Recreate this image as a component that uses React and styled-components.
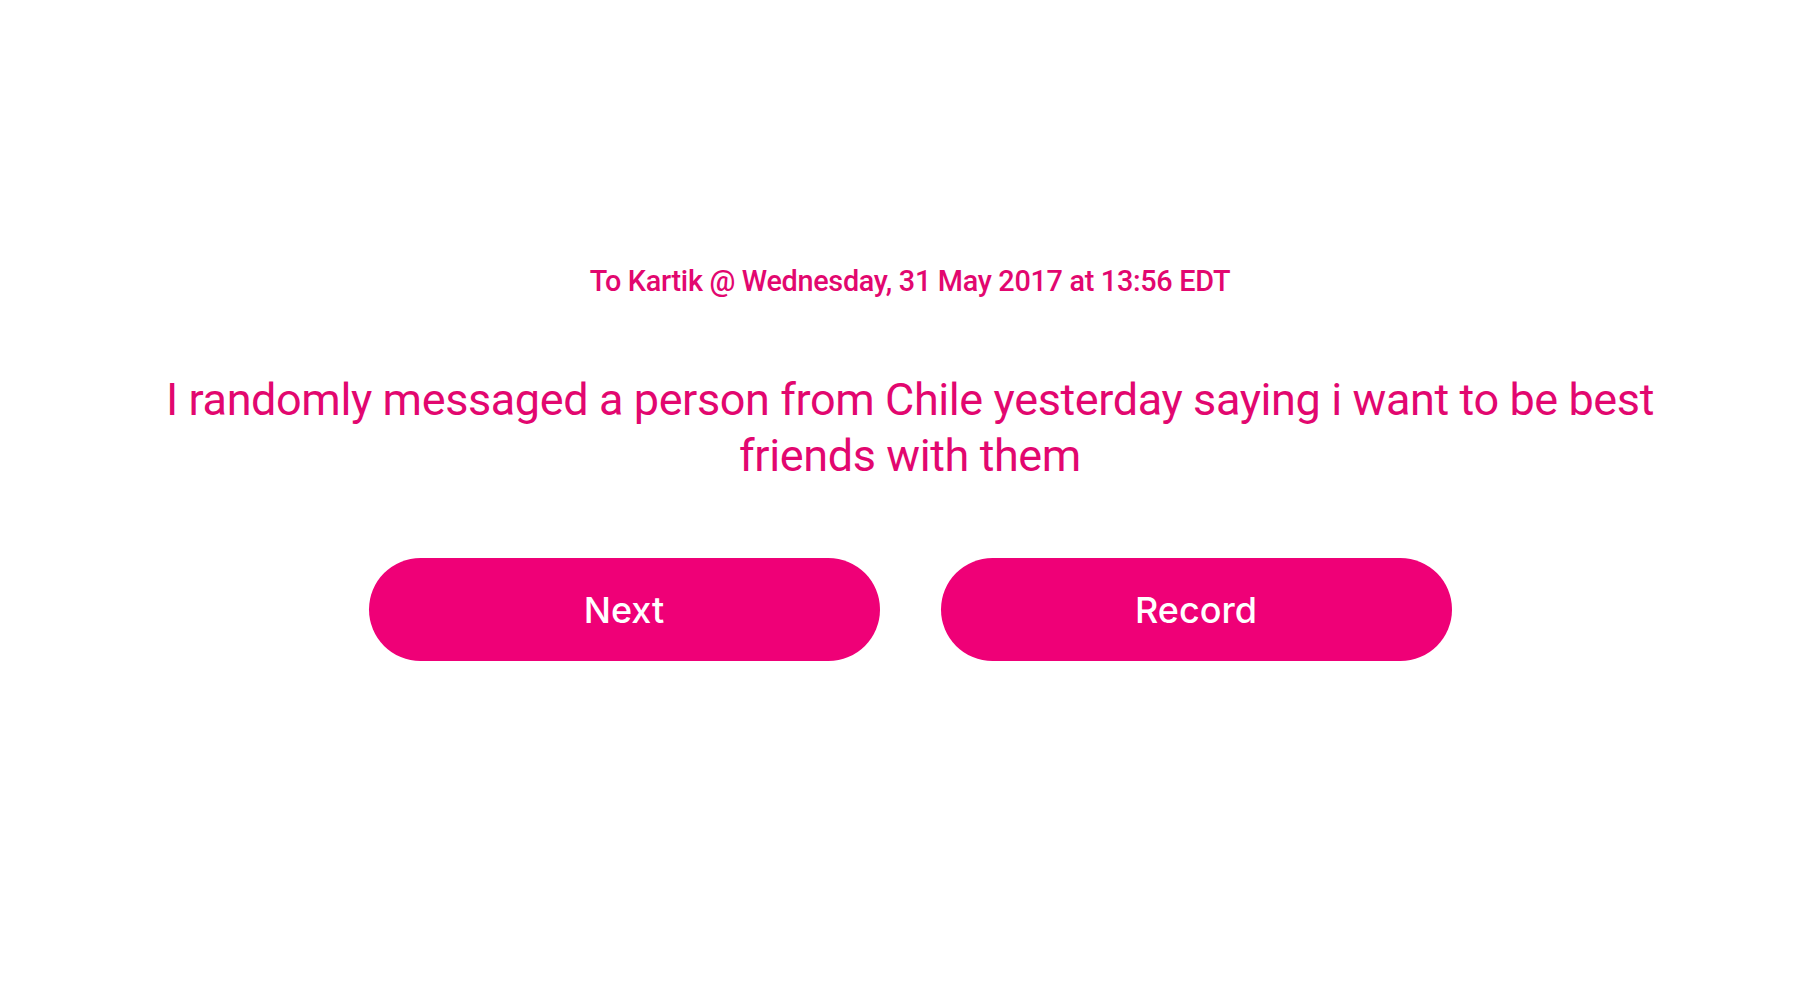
import React from "react";
import styled, { createGlobalStyle } from "styled-components";

const Global = createGlobalStyle`
  html, body { margin: 0; padding: 0; background: #ffffff; }
  body { font-family: Roboto, "Liberation Sans", sans-serif; }
`;

const Page = styled.main`
  min-height: 1008px;
  display: flex;
  flex-direction: column;
  align-items: center;
  padding: 263px 0 0 14px;
  box-sizing: border-box;
`;

const Meta = styled.div`
  color: #e2076f;
  font-family: Roboto, "Liberation Sans", sans-serif;
  font-weight: 500;
  font-size: 28.8px;
  line-height: 36px;
  letter-spacing: -0.3px;
`;

const Message = styled.p`
  margin: 73px 0 0;
  max-width: 1580px;
  text-align: center;
  color: #e2076f;
  font-family: Roboto, "Liberation Sans", sans-serif;
  font-weight: 400;
  font-size: 45px;
  line-height: 56px;
  letter-spacing: -0.4px;
`;

const Actions = styled.div`
  margin-top: 74px;
  display: flex;
  gap: 61px;
`;

const Button = styled.button`
  width: 511px;
  height: 103px;
  border: none;
  border-radius: 52px;
  background: #ef0077;
  color: #ffffff;
  font-family: Inter, "Liberation Sans", sans-serif;
  font-weight: 500;
  font-size: 36px;
  cursor: pointer;
`;

export default function App() {
  return (
    <>
      <Global />
      <Page>
        <Meta>To Kartik @ Wednesday, 31 May 2017 at 13:56 EDT</Meta>
        <Message>
          I randomly messaged a person from Chile yesterday saying i want to be best friends with them
        </Message>
        <Actions>
          <Button>Next</Button>
          <Button>Record</Button>
        </Actions>
      </Page>
    </>
  );
}
